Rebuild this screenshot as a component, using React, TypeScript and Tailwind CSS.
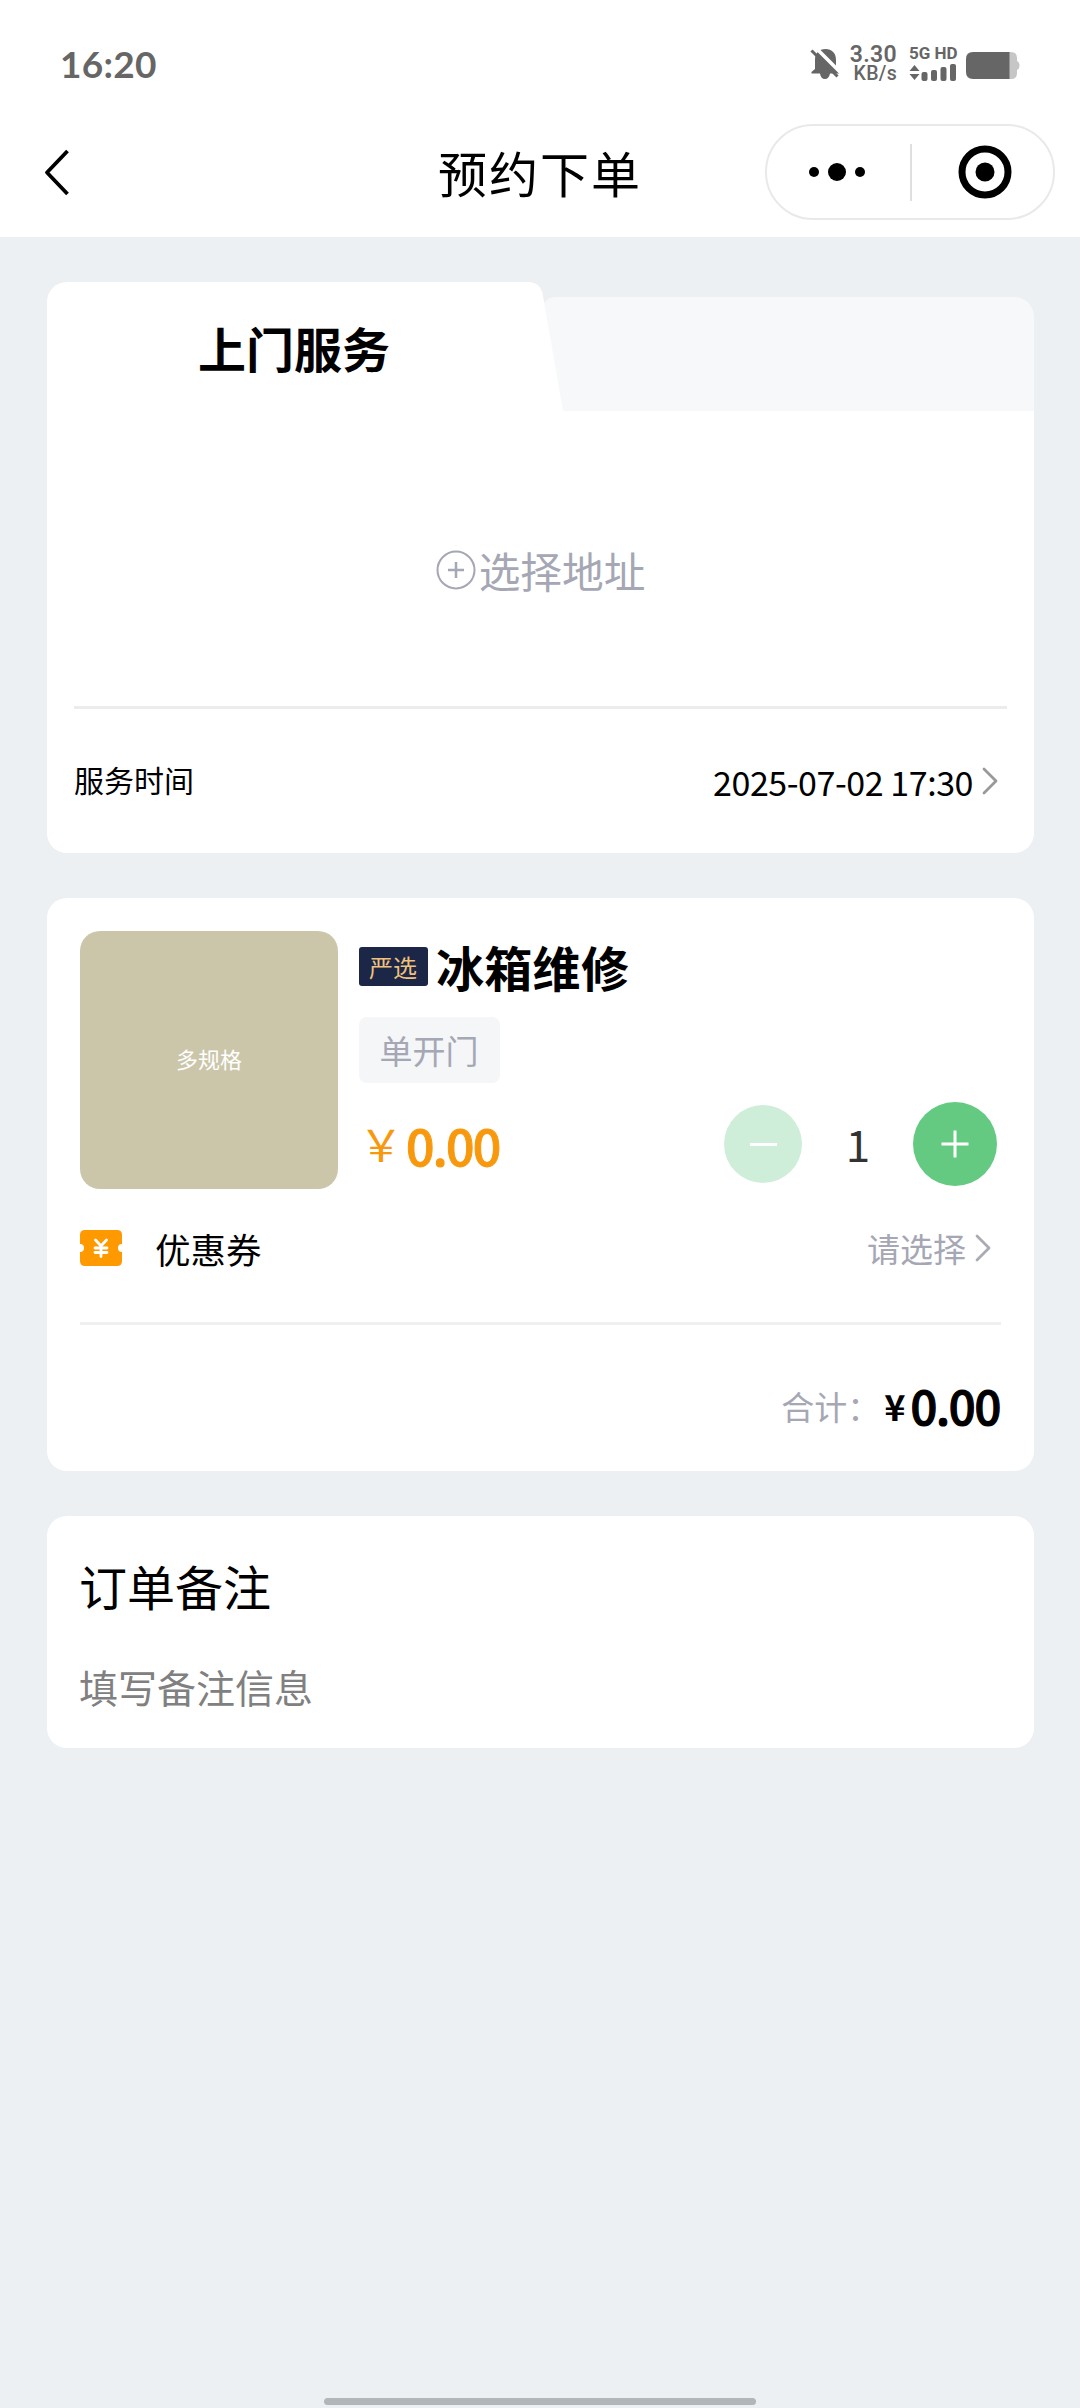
import { useState } from 'react'

const Chevron = ({ color }: { color: string }) => (
  <svg width="16" height="28" viewBox="0 0 16 28" fill="none" stroke={color} strokeWidth="2.800" strokeLinecap="round" strokeLinejoin="round">
    <path d="M2 2 L14 14 L2 26" />
  </svg>
)

function StatusBar() {
  return (
    <div className="flex h-[124px] items-start justify-between pl-[60px] pr-[60px] text-[#666]">
      <span className="mt-[45px] font-[Lato] text-[37px] leading-[37px] font-bold tracking-[0.300px]">16:20</span>
      <div className="mt-[46px] flex items-start">
        <svg className="mt-[2px]" width="30" height="32" viewBox="0 0 30 32">
          <path
            fill="#666"
            d="M5 12 C5 5 9 1 15.5 1 C22 1 26 5 26 12 V21 L29.500 25.500 H20 C19.500 29 17.500 31 15 31 C12 31 10.500 29 10 25.500 H2 C1.200 25.500 1 24.500 2 23.500 L5 21 Z"
          />
          <path d="M4 -2 L33 27" stroke="#fff" strokeWidth="3.500" />
          <path d="M1.500 2.500 L27.500 28.500" stroke="#666" strokeWidth="3" />
        </svg>
        <div className="ml-[10px] flex w-[47px] flex-col items-end font-[Roboto] whitespace-nowrap">
          <span className="text-[23px] leading-[18px] font-semibold tracking-[0.300px]">3.30</span>
          <span className="mt-[2px] text-[19.500px] leading-[16px] font-medium tracking-[0.300px]">KB/s</span>
        </div>
        <div className="ml-[12px] flex w-[49px] flex-col">
          <span className="font-[Roboto] text-[17px] leading-[14px] font-bold whitespace-nowrap">5G HD</span>
          <svg className="mt-[3px]" width="49" height="18" viewBox="0 0 49 18" fill="#666">
            <path d="M5.500 2 L10.500 8 H0.500 Z M5.500 17 L10.500 11 H0.500 Z" />
            <rect x="12.500" y="9" width="6" height="9" rx="2" />
            <rect x="22" y="7" width="6" height="11" rx="2" />
            <rect x="31.500" y="4" width="6" height="14" rx="2" />
            <rect x="41" y="1" width="6" height="17" rx="2" />
          </svg>
        </div>
        <svg className="ml-[8px] mt-[6px]" width="54" height="27" viewBox="0 0 54 27">
          <path d="M43 0 H45 Q51 0 51 6 V9 Q53.500 10 53.500 13.500 Q53.500 17 51 18 V21 Q51 27 45 27 H43 Z" fill="#c6c6c6" />
          <path d="M7 0 H43.500 V27 H7 Q0 27 0 20 V7 Q0 0 7 0 Z" fill="#666" />
        </svg>
      </div>
    </div>
  )
}

function NavBar() {
  return (
    <div className="flex h-[113px] items-start justify-between pr-[25px] pl-[43px]">
      <svg className="mt-[24px]" width="28" height="48" viewBox="0 0 28 48" fill="none" stroke="#000" strokeWidth="3.800" strokeLinejoin="round">
        <path d="M24.500 3 L4 24.500 L24.500 46" />
      </svg>
      <h1 className="mt-[23px] ml-[244px] text-[49px] leading-[49px] tracking-[2px]">预约下单</h1>
      <div className="flex h-[96px] w-[290px] items-center rounded-full border-2 border-[#e9e9e9]">
        <button className="flex w-[143px] justify-center">
          <svg width="58" height="20" viewBox="0 0 58 20">
            <circle cx="5" cy="10" r="5" />
            <circle cx="28" cy="10" r="9" />
            <circle cx="51" cy="10" r="5" />
          </svg>
        </button>
        <div className="h-[57px] w-[2px] bg-[#dfdfdf]" />
        <button className="flex flex-1 justify-center pl-[5px]">
          <svg width="54" height="54" viewBox="0 0 54 54">
            <circle cx="27" cy="27" r="23" fill="none" stroke="#000" strokeWidth="7" />
            <circle cx="27" cy="27" r="9.500" />
          </svg>
        </button>
      </div>
    </div>
  )
}

function ServiceCard() {
  return (
    <section>
      <div className="flex h-[129px]">
        <div className="flex w-[480px] justify-center rounded-tl-[20px] bg-white pt-[41px] pl-[14px]">
          <h2 className="text-[48px] leading-[48px] font-bold">上门服务</h2>
        </div>
        {/* slanted edge between the two tabs */}
        <svg width="40" height="129" viewBox="0 0 40 129">
          <path d="M12 129 V30 Q18 15 28 15 H40 V129 Z" fill="#f6f8fa" />
          <path d="M0 0 H1 Q14 0 16 14 L36 129 H0 Z" fill="#fff" />
        </svg>
        <div className="mt-[15px] flex-1 rounded-tr-[20px] bg-[#f6f8fa]" />
      </div>
      <div className="rounded-b-[20px] bg-white px-[27px]">
        <button className="flex h-[295px] w-full items-start justify-center pt-[139px] text-[#a5a7b4]">
          <svg width="40" height="40" viewBox="0 0 40 40" fill="none" stroke="currentColor" strokeWidth="2">
            <circle cx="20" cy="20" r="18.500" />
            <path d="M12 20 H28 M20 12 V28" strokeWidth="2.500" />
          </svg>
          <span className="ml-[3px] text-[41.700px] leading-[41px]">选择地址</span>
        </button>
        <div className="h-[3px] bg-[#eaecee]" />
        <div className="flex h-[144px] items-start justify-between pt-[56px] pr-[9px]">
          <span className="text-[30px] leading-[29px]">服务时间</span>
          <span className="flex items-start text-[34px] leading-[33px] tracking-[-0.450px]">
            2025-07-02 17:30
            <span className="mt-[2px] ml-[9px]"><Chevron color="#999" /></span>
          </span>
        </div>
      </div>
    </section>
  )
}

function OrderCard() {
  const [count, setCount] = useState(1)

  return (
    <section className="mt-[45px] h-[573px] rounded-[20px] bg-white px-[33px] pt-[33px]">
      <div className="flex">
        <div className="flex h-[258px] w-[258px] items-center justify-center rounded-[20px] bg-[#cbc6aa] pb-[3px] text-[22px] text-white">
          多规格
        </div>
        <div className="ml-[21px] flex flex-1 flex-col items-start">
          <div className="flex items-start">
            <span className="mt-[16px] flex h-[39px] w-[69px] items-center justify-center rounded-[3px] bg-[#1c2647] pr-[1px] text-[24px] leading-[24px] text-[#f0c27c]">
              严选
            </span>
            <h3 className="mt-[11px] ml-[8px] text-[48px] leading-[48px] font-bold tracking-[0.300px]">冰箱维修</h3>
          </div>
          <span className="mt-[27px] flex h-[66px] w-[141px] items-center justify-center rounded-[8px] bg-[#f4f6f8] pr-[1px] text-[33px] leading-[33px] text-[#a5a7b4]">
            单开门
          </span>
          <div className="mt-[19px] flex h-[84px] w-full items-center justify-between pr-[4px]">
            <div className="flex items-start text-[#f8980d]">
              <span className="text-[44px] leading-[48px]">￥</span>
              <span className="ml-[3px] text-[50px] leading-[50px] font-medium tracking-[-1.700px] [-webkit-text-stroke:1px_#f8980d]">0.00</span>
            </div>
            <div className="flex items-center">
              <button
                className="flex h-[78px] w-[78px] items-center justify-center rounded-full bg-[#cfeed9]"
                onClick={() => setCount(Math.max(1, count - 1))}
              >
                <span className="h-[3px] w-[27px] bg-white" />
              </button>
              <span className="w-[111px] pb-[3px] pl-[1px] text-center text-[44px] leading-[44px] text-[#333]">{count}</span>
              <button
                className="flex h-[84px] w-[84px] items-center justify-center rounded-full bg-[#64ca81]"
                onClick={() => setCount(count + 1)}
              >
                <svg width="28" height="28" viewBox="0 0 28 28" stroke="#fff" strokeWidth="3">
                  <path d="M0.500 14 H27.500 M14 0.500 V27.500" />
                </svg>
              </button>
            </div>
          </div>
        </div>
      </div>

      <div className="flex h-[133px] items-start pt-[41px] pr-[10px]">
        <svg width="42" height="36" viewBox="0 0 42 36">
          <path
            fill="#ff9900"
            d="M5 0 H37 Q42 0 42 5 V14 A4 4 0 0 0 42 22 V31 Q42 36 37 36 H5 Q0 36 0 31 V22 A4 4 0 0 0 0 14 V5 Q0 0 5 0 Z"
          />
          <path d="M15.500 10 L21 16 L26.500 10 M21 16 V26.500 M15 18 H27 M15 22.500 H27" fill="none" stroke="#fff" strokeWidth="2.800" strokeLinecap="round" />
        </svg>
        <span className="ml-[33px] flex-1 text-[35.500px] leading-[37px]">优惠券</span>
        <span className="text-[33px] leading-[37px] text-[#a5a7b4]">请选择</span>
        <span className="mt-[4px] ml-[9px]"><Chevron color="#a9abb2" /></span>
      </div>
      <div className="h-[3px] bg-[#eef0f1]" />
      <div className="flex items-start justify-end pt-[56px] pr-[1px]">
        <span className="text-[33px] leading-[50px] text-[#a5a7b4]">合计：</span>
        <span className="ml-[4px] text-[36px] leading-[49px] font-bold">¥</span>
        <span className="ml-[5px] text-[47px] leading-[48px] font-medium tracking-[-1.200px] [-webkit-text-stroke:1.200px_#000]">0.00</span>
      </div>
    </section>
  )
}

function RemarkCard() {
  return (
    <section className="mt-[45px] h-[232px] rounded-[20px] bg-white px-[32px] pt-[45px]">
      <h3 className="text-[48px] leading-[48px]">订单备注</h3>
      <p className="mt-[58px] text-[39px] leading-[39px] text-[#808080]">填写备注信息</p>
    </section>
  )
}

export default function App() {
  return (
    <div className="flex h-[2408px] w-[1080px] flex-col bg-[#ecf0f3] font-['Noto_Sans_CJK_SC',sans-serif] text-black">
      <header className="bg-white">
        <StatusBar />
        <NavBar />
      </header>
      <main className="flex-1 pt-[45px] pr-[46px] pl-[47px]">
        <ServiceCard />
        <OrderCard />
        <RemarkCard />
      </main>
      <div className="mx-auto mb-[3px] h-[7px] w-[432px] rounded-full bg-[#b2b6b8]" />
    </div>
  )
}
